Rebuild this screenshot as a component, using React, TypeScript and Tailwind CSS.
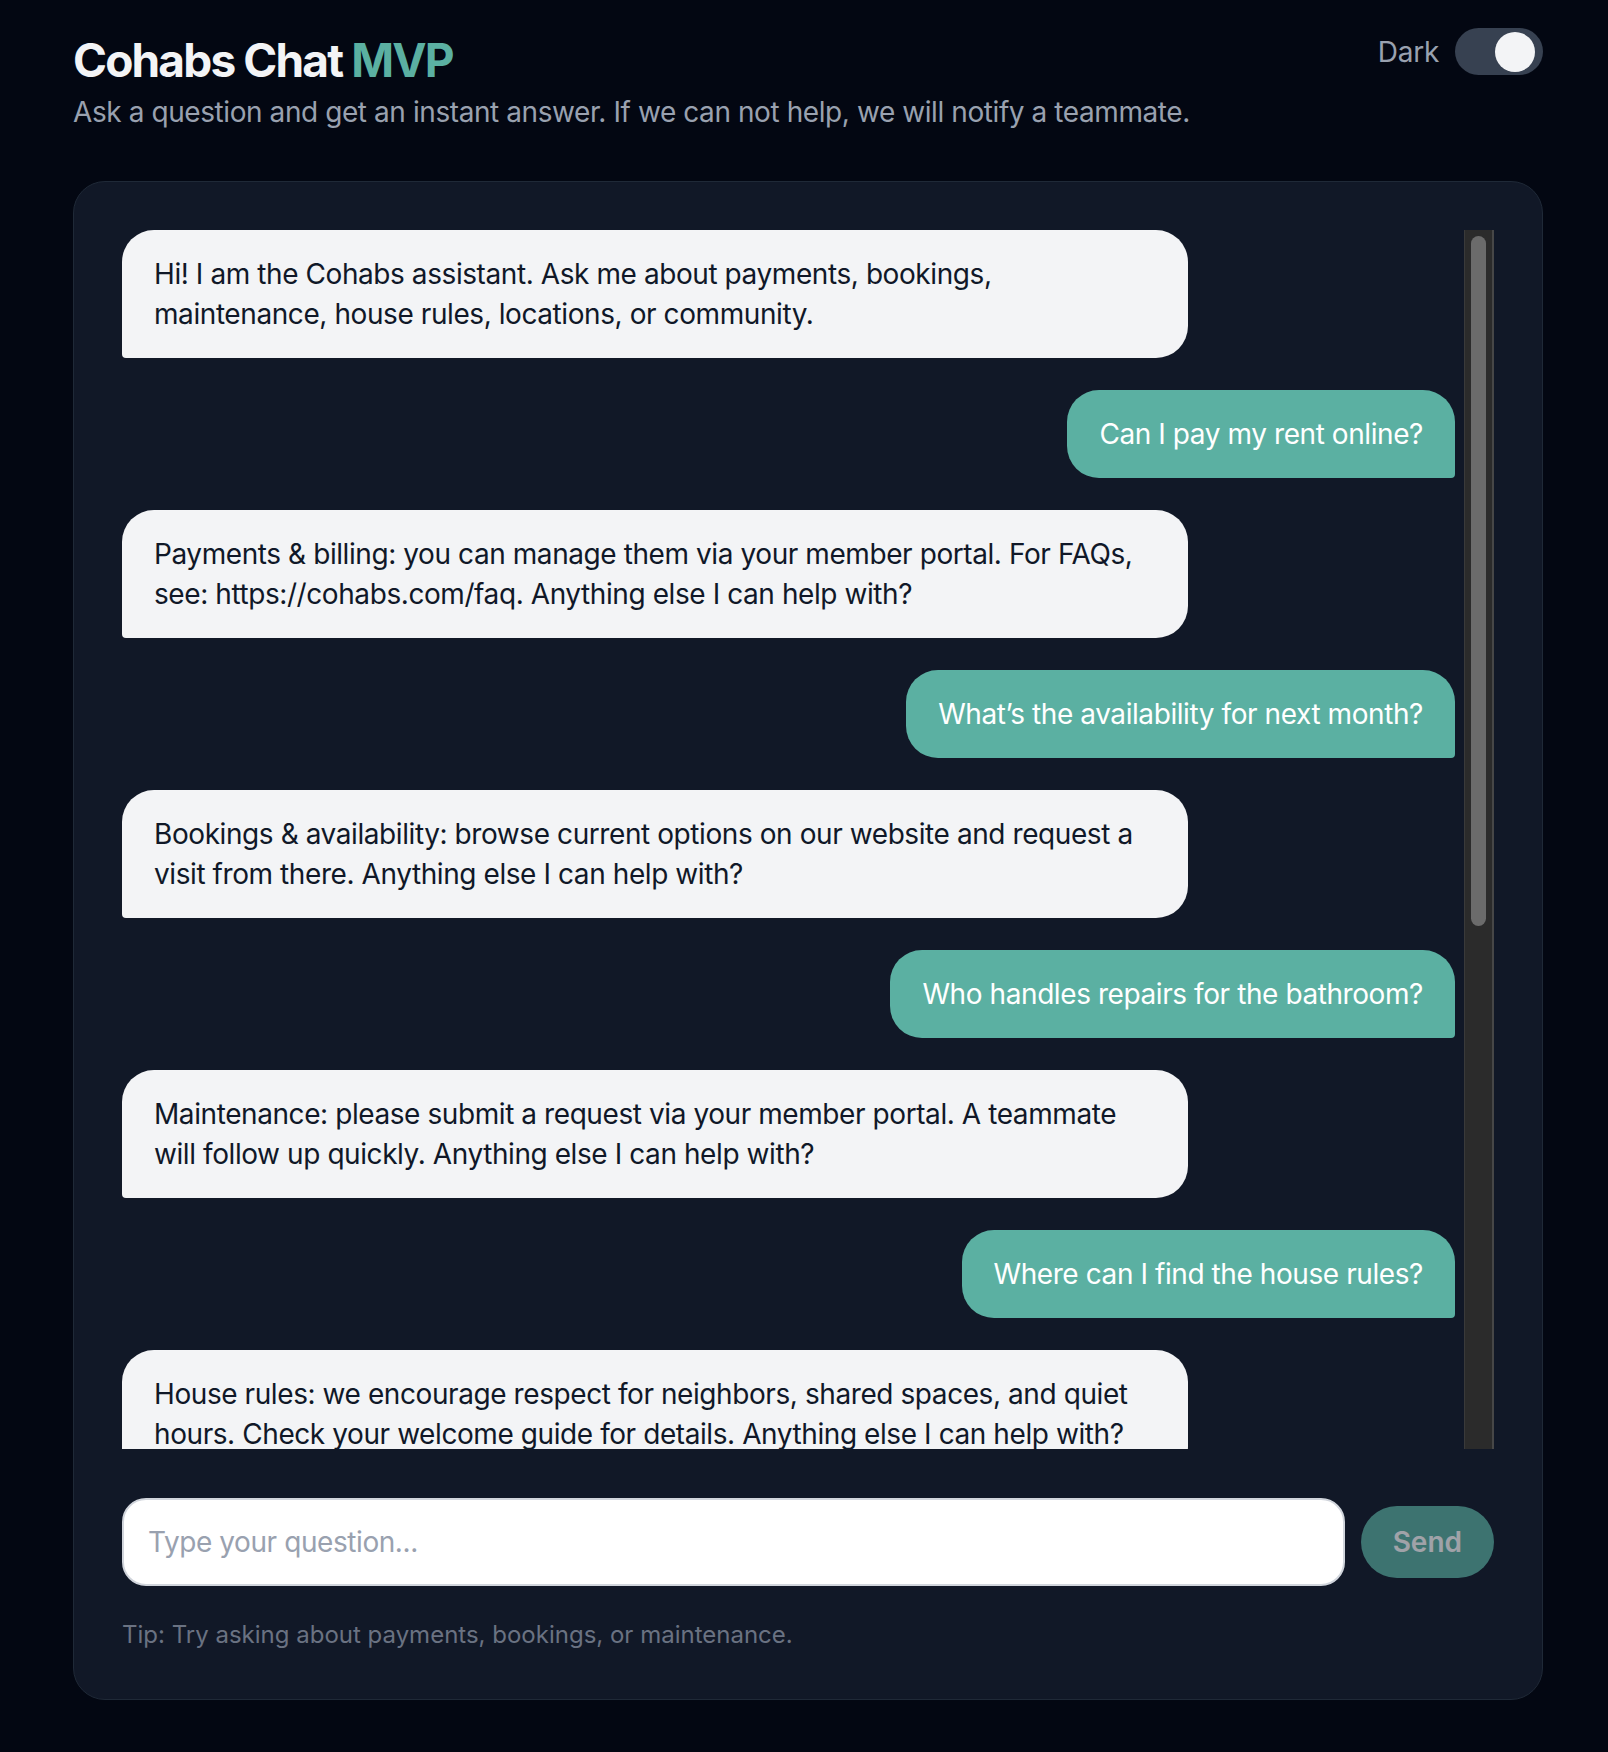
import React from "react";

type Msg = { from: "bot" | "user"; text: string };

const messages: Msg[] = [
  { from: "bot", text: "Hi! I am the Cohabs assistant. Ask me about payments, bookings, maintenance, house rules, locations, or community." },
  { from: "user", text: "Can I pay my rent online?" },
  { from: "bot", text: "Payments & billing: you can manage them via your member portal. For FAQs, see: https://cohabs.com/faq. Anything else I can help with?" },
  { from: "user", text: "What’s the availability for next month?" },
  { from: "bot", text: "Bookings & availability: browse current options on our website and request a visit from there. Anything else I can help with?" },
  { from: "user", text: "Who handles repairs for the bathroom?" },
  { from: "bot", text: "Maintenance: please submit a request via your member portal. A teammate will follow up quickly. Anything else I can help with?" },
  { from: "user", text: "Where can I find the house rules?" },
  { from: "bot", text: "House rules: we encourage respect for neighbors, shared spaces, and quiet hours. Check your welcome guide for details. Anything else I can help with?" },
  { from: "user", text: "Which cities are you in?" },
  { from: "bot", text: "Locations: we have houses in several European cities and New York. See the full list on our website. Anything else I can help with?" },
  { from: "user", text: "Are there community events?" },
  { from: "bot", text: "Community: members get access to regular events and activities. Check the member app for the latest schedule. Anything else I can help with?" },
];

const App = () => {
  const [dark, setDark] = React.useState(true);
  const [input, setInput] = React.useState("");

  return (
    <div className="min-h-screen bg-[#030712] pl-[73px] pr-[65px] pt-[28px] pb-12 font-['Inter','Noto_Sans',sans-serif]">
      {/* Header */}
      <div className="flex items-start justify-between">
        <div>
          <h1 className="text-[46px] leading-[64px] font-bold tracking-[-0.04em] text-gray-100">
            Cohabs Chat <span className="text-[#5bb0a2]">MVP</span>
          </h1>
          <p className="text-[28px] leading-[40px] tracking-[-0.015em] text-gray-400">
            Ask a question and get an instant answer. If we can not help, we will notify a teammate.
          </p>
        </div>

        <div className="flex items-center gap-4">
          <span className="text-[28px] leading-[40px] tracking-[-0.01em] text-gray-400">Dark</span>
          <button
            aria-label="Toggle dark mode"
            onClick={() => setDark(!dark)}
            className="flex h-[47px] w-[88px] items-center rounded-full bg-[#374151] px-1"
          >
            <span
              className={
                dark
                  ? "ml-auto mr-1 h-10 w-10 rounded-full bg-gray-100"
                  : "h-10 w-10 rounded-full bg-gray-100"
              }
            />
          </button>
        </div>
      </div>

      {/* Chat card */}
      <div className="mt-[49px] rounded-[32px] border border-[#1f2937] bg-[#111827] p-12">
        <div className="flex h-[1219px]">
          <div className="flex-1 overflow-y-auto pr-[9px] [scrollbar-width:none]">
            <div className="flex flex-col gap-8">
              {messages.map((m, i) =>
                m.from === "bot" ? (
                  <div key={i} className="flex justify-start">
                    <div className="max-w-[80%] rounded-[32px] rounded-bl-[4px] bg-gray-100 px-8 py-6 text-[28px] leading-[40px] tracking-[-0.015em] text-gray-900">
                      {m.text}
                    </div>
                  </div>
                ) : (
                  <div key={i} className="flex justify-end">
                    <div className="max-w-[80%] rounded-[32px] rounded-br-[4px] bg-[#5bb0a2] px-8 py-6 text-[28px] leading-[40px] tracking-[-0.015em] text-white">
                      {m.text}
                    </div>
                  </div>
                )
              )}
            </div>
          </div>

          {/* Scrollbar */}
          <div className="w-[30px] shrink-0 border-l border-r-2 border-l-[#3a3a3a] border-r-[#474747] bg-[#2b2b2b] px-[6px] pt-[6px]">
            <div className="h-[690px] rounded-full bg-[#6b6b6b]" />
          </div>
        </div>

        {/* Input row */}
        <div className="mt-[49px] flex items-center gap-4">
          <input
            value={input}
            onChange={(e) => setInput(e.target.value)}
            placeholder="Type your question..."
            className="h-[88px] flex-1 rounded-[24px] border-2 border-gray-300 bg-white px-6 text-[28px] tracking-[-0.015em] text-gray-900 placeholder:text-gray-400 outline-none"
          />
          <button
            disabled={!input.trim()}
            className="h-[72px] rounded-full bg-[#5bb0a2] px-8 text-[28px] font-semibold text-white disabled:opacity-60"
          >
            Send
          </button>
        </div>

        <p className="mt-[33px] text-[24px] leading-[32px] text-gray-500">
          Tip: Try asking about payments, bookings, or maintenance.
        </p>
      </div>
    </div>
  );
};

export default App;
